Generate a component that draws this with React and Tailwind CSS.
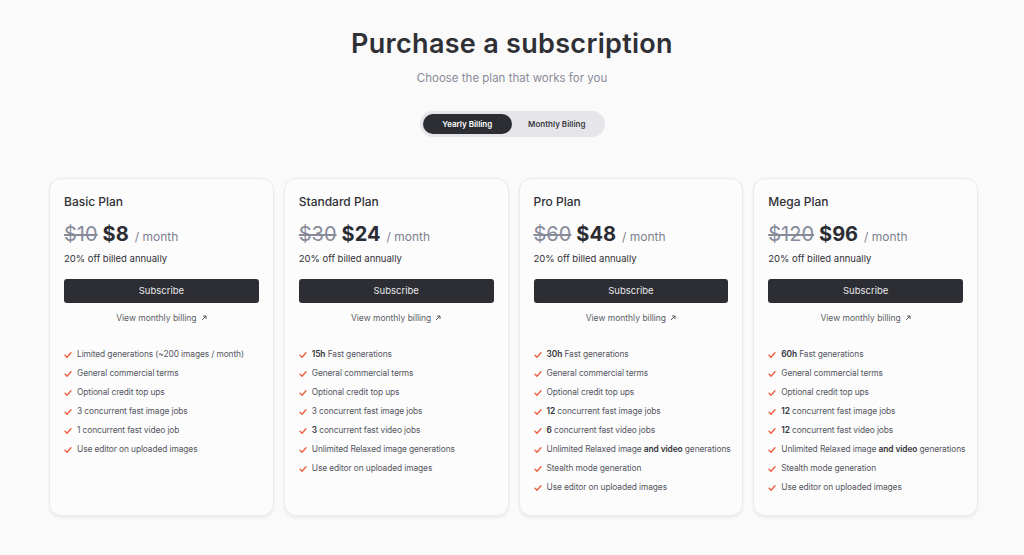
import React, { useState } from 'react';

const plans = [
  {
    name: 'Basic Plan',
    was: '$10',
    price: '$8',
    features: [
      ['', 'Limited generations (~200 images / month)'],
      ['', 'General commercial terms'],
      ['', 'Optional credit top ups'],
      ['', '3 concurrent fast image jobs'],
      ['', '1 concurrent fast video job'],
      ['', 'Use editor on uploaded images'],
    ],
  },
  {
    name: 'Standard Plan',
    was: '$30',
    price: '$24',
    features: [
      ['15h', ' Fast generations'],
      ['', 'General commercial terms'],
      ['', 'Optional credit top ups'],
      ['', '3 concurrent fast image jobs'],
      ['3', ' concurrent fast video jobs'],
      ['', 'Unlimited Relaxed image generations'],
      ['', 'Use editor on uploaded images'],
    ],
  },
  {
    name: 'Pro Plan',
    was: '$60',
    price: '$48',
    features: [
      ['30h', ' Fast generations'],
      ['', 'General commercial terms'],
      ['', 'Optional credit top ups'],
      ['12', ' concurrent fast image jobs'],
      ['6', ' concurrent fast video jobs'],
      ['', 'relaxed'],
      ['', 'Stealth mode generation'],
      ['', 'Use editor on uploaded images'],
    ],
  },
  {
    name: 'Mega Plan',
    was: '$120',
    price: '$96',
    features: [
      ['60h', ' Fast generations'],
      ['', 'General commercial terms'],
      ['', 'Optional credit top ups'],
      ['12', ' concurrent fast image jobs'],
      ['12', ' concurrent fast video jobs'],
      ['', 'relaxed'],
      ['', 'Stealth mode generation'],
      ['', 'Use editor on uploaded images'],
    ],
  },
];

const Check = () => (
  <svg width="8" height="8" viewBox="0 0 8 8" fill="none" className="shrink-0">
    <path d="M1 4.3 L3 6.2 L7 1.8" stroke="#ee5b3d" strokeWidth="1.3" strokeLinecap="round" strokeLinejoin="round" />
  </svg>
);

const Feature = ({ bold, text }) => (
  <li className="flex items-center gap-[5px] h-[19px] text-[8.4px] tracking-[-0.1px] whitespace-nowrap text-[#55565f]">
    <Check />
    {text === 'relaxed' ? (
      <span>
        Unlimited Relaxed image <b className="font-semibold text-[#33343a]">and video</b> generations
      </span>
    ) : (
      <span>
        {bold && <b className="font-semibold text-[#33343a]">{bold}</b>}
        {text}
      </span>
    )}
  </li>
);

const PlanCard = ({ plan }) => (
  <div className="bg-[#fcfcfc] border border-[#ebebeb] rounded-[12px] shadow-[0_2px_3px_rgba(0,0,0,0.06)] px-[14px] pt-[15px] pb-[18px]">
    <h3 className="text-[12px] leading-[16px] font-medium text-[#2f3036]">{plan.name}</h3>
    <div className="mt-[10px] flex items-baseline h-[28px]">
      <span className="text-[20px] leading-[28px] text-[#868a99] line-through decoration-[1.5px]">{plan.was}</span>
      <span className="ml-[5px] text-[20px] leading-[28px] font-bold text-[#2b2c32]">{plan.price}</span>
      <span className="ml-[6px] text-[12px] text-[#7b7f90]">/ month</span>
    </div>
    <p className="mt-[4px] text-[9.5px] leading-[14px] text-[#2f3036]">20% off billed annually</p>
    <button className="mt-[13px] w-full h-[24px] rounded-[3px] bg-[#2c2e34] text-[#e8e8ea] text-[9.5px]">
      Subscribe
    </button>
    <div className="mt-[9px] flex items-center justify-center gap-[4px] text-[8.5px] leading-[12px] text-[#5b5c66]">
      View monthly billing
      <svg width="6" height="6" viewBox="0 0 6 6" fill="none">
        <path d="M1 5 L5 1 M2 1 H5 V4" stroke="#4a4b55" strokeWidth="0.9" />
      </svg>
    </div>
    <ul className="mt-[21px] flex flex-col">
      {plan.features.map(([b, t], i) => (
        <Feature key={i} bold={b} text={t} />
      ))}
    </ul>
  </div>
);

export default function App() {
  const [yearly, setYearly] = useState(true);
  return (
    <div className="min-h-[555px] bg-[#fafafa] font-['Inter',sans-serif] flex flex-col items-center pt-[25px]">
      <h1 className="text-[27px] leading-[38px] font-semibold text-[#2f3036] tracking-[0.3px]">Purchase a subscription</h1>
      <p className="mt-[7px] text-[11.5px] leading-[16px] text-[#8a8b9b]">Choose the plan that works for you</p>
      <div className="mt-[25px] flex items-center p-[3px] bg-[#e6e6ea] rounded-full w-[185px] h-[26px]">
        <button
          onClick={() => setYearly(true)}
          className={`flex-1 h-full rounded-full text-[8px] font-semibold ${yearly ? 'bg-[#2c2e34] text-white' : 'text-[#3a3b42]'}`}
        >
          Yearly Billing
        </button>
        <button
          onClick={() => setYearly(false)}
          className={`flex-1 h-full rounded-full text-[8px] font-semibold ${!yearly ? 'bg-[#2c2e34] text-white' : 'text-[#3a3b42]'}`}
        >
          Monthly Billing
        </button>
      </div>
      <div className="mt-[41px] ml-[3px] w-[929px] grid grid-cols-4 gap-[10px]">
        {plans.map((p) => (
          <PlanCard key={p.name} plan={p} />
        ))}
      </div>
    </div>
  );
}
